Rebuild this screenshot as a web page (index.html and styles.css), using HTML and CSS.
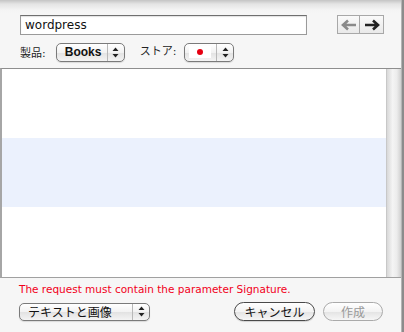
FILE: index.html
```html
<!DOCTYPE html>
<html lang="ja">
<head>
  <meta charset="UTF-8">
  <title>新規作成</title>
  <link rel="stylesheet" href="styles.css">
</head>
<body>
<div class="sheet">
  <div class="toolbar">
    <div class="search-row">
      <div class="search-field">wordpress</div>
      <div class="nav">
        <span class="nav-btn back">
          <svg width="18" height="12" viewBox="0 0 18 12"><path d="M16 6H3M8 1.5L3 6l5 4.5" fill="none" stroke="#8a8a8a" stroke-width="2.6"/></svg>
        </span>
        <span class="nav-btn fwd">
          <svg width="18" height="12" viewBox="0 0 18 12"><path d="M2 6h13M10 1.5L15 6l-5 4.5" fill="none" stroke="#222" stroke-width="2.6"/></svg>
        </span>
      </div>
    </div>
    <div class="filter-row">
      <span class="label">製品:</span>
      <div class="popup popup-product">
        <span class="popup-text">Books</span>
        <span class="popup-arrows">
          <svg width="7" height="11" viewBox="0 0 7 11"><path d="M3.5 0.5L6.5 4H0.5zM3.5 10.5L6.5 7H0.5z" fill="#222"/></svg>
        </span>
      </div>
      <span class="label store-label">ストア:</span>
      <div class="popup popup-store">
        <span class="popup-text"><span class="flag"><span class="dot"></span></span></span>
        <span class="popup-arrows">
          <svg width="7" height="11" viewBox="0 0 7 11"><path d="M3.5 0.5L6.5 4H0.5zM3.5 10.5L6.5 7H0.5z" fill="#222"/></svg>
        </span>
      </div>
    </div>
  </div>

  <div class="list">
    <div class="rows">
      <div class="row"></div>
      <div class="row selected"></div>
      <div class="row"></div>
    </div>
    <div class="scrollbar"></div>
  </div>

  <p class="error">The request must contain the parameter Signature.</p>

  <div class="footer">
    <div class="popup popup-format">
      <span class="popup-text">テキストと画像</span>
      <span class="popup-arrows">
        <svg width="7" height="11" viewBox="0 0 7 11"><path d="M3.5 0.5L6.5 4H0.5zM3.5 10.5L6.5 7H0.5z" fill="#222"/></svg>
      </span>
    </div>
    <div class="buttons">
      <button class="push">キャンセル</button>
      <button class="push" disabled>作成</button>
    </div>
  </div>
</div>
</body>
</html>
```
FILE: styles.css
```css
* {
  margin: 0;
  padding: 0;
  box-sizing: border-box;
}

body {
  width: 404px;
  height: 332px;
  overflow: hidden;
  font-family: "DejaVu Sans", "Noto Sans CJK JP", sans-serif;
  font-size: 12px;
  color: #111;
  background: #8c8c8c;
}

.sheet {
  width: 402px;
  height: 332px;
  display: flex;
  flex-direction: column;
  background: linear-gradient(#c4c4c4 0, #e4e4e4 4px, #f4f4f4 10px, #f6f6f6 14px, #f6f6f6);
  border-right: 1px solid #b5b5b5;
}

.toolbar {
  padding: 15px 0 0 20px;
}

.search-row {
  display: flex;
  align-items: flex-start;
}

.search-field {
  width: 287px;
  height: 20px;
  background: #fff;
  border: 1px solid #9a9a9a;
  border-top-color: #6f6f6f;
  box-shadow: inset 0 1px 1px rgba(0, 0, 0, 0.12);
  font-size: 12px;
  line-height: 18px;
  padding-left: 4px;
}

.nav {
  display: flex;
  margin-left: 30px;
  height: 19px;
  border: 1px solid #a8a8a8;
  background: linear-gradient(#fafafa, #e9e9e9);
}

.nav-btn {
  width: 23px;
  display: flex;
  align-items: center;
  justify-content: center;
}

.nav-btn.back {
  width: 22px;
  border-right: 1px solid #a8a8a8;
}

.filter-row {
  display: flex;
  align-items: center;
  margin-top: 7px;
  height: 20px;
}

.label {
  font-size: 11px;
  color: #222;
  margin-right: 10px;
}

.store-label {
  margin-left: 15px;
  margin-right: 8px;
  position: relative;
  top: -2px;
}

.popup {
  display: flex;
  align-items: stretch;
  height: 19px;
  border: 1px solid #7a7a7a;
  border-radius: 5px;
  background: linear-gradient(#ffffff, #f2f2f2 50%, #e2e2e2 51%, #f4f4f4);
  box-shadow: 0 1px 1px rgba(0, 0, 0, 0.12);
}

.popup-text {
  flex: 1;
  display: flex;
  align-items: center;
  padding-left: 8px;
  font-size: 12px;
}

.popup-product .popup-text {
  font-family: "Liberation Sans", sans-serif;
  font-weight: bold;
  font-size: 12px;
}

.popup-arrows {
  width: 17px;
  border-left: 1px solid #b8b8b8;
  display: flex;
  align-items: center;
  justify-content: center;
}

.popup-product {
  width: 69px;
}

.popup-store {
  width: 50px;
}

.popup-store .popup-text {
  padding-left: 4px;
}

.flag {
  width: 22px;
  height: 12px;
  background: #fff;
  display: flex;
  align-items: center;
  justify-content: center;
}

.dot {
  width: 6px;
  height: 6px;
  border-radius: 50%;
  background: #e60012;
}

.list {
  margin-top: 6px;
  height: 210px;
  display: flex;
  background: #fff;
  border-top: 1px solid #8e8e8e;
  border-left: 2px solid #a6a6a6;
  border-bottom: 1px solid #a0a0a0;
}

.rows {
  flex: 1;
}

.row {
  height: 69px;
}

.row.selected {
  background: #ebf1fd;
}

.scrollbar {
  width: 15px;
  background: linear-gradient(90deg, #d8d8d8, #f4f4f4 40%, #ececec 70%, #d0d0d0);
  border-left: 1px solid #c8c8c8;
}

.error {
  height: 22px;
  line-height: 22px;
  padding-left: 19px;
  font-size: 10.5px;
  color: #f2001a;
}

.footer {
  display: flex;
  align-items: center;
  justify-content: space-between;
  padding: 2px 18px 0 19px;
}

.popup-format {
  width: 131px;
  height: 18px;
}

.buttons {
  display: flex;
  gap: 8px;
}

.push {
  height: 19px;
  border: 1px solid #4a4a4a;
  border-radius: 10px;
  background: linear-gradient(#ffffff, #f3f3f3 50%, #e3e3e3 51%, #f6f6f6);
  font-family: "DejaVu Sans", "Noto Sans CJK JP", sans-serif;
  font-size: 12px;
  color: #111;
  width: 81px;
  box-shadow: 0 1px 1px rgba(0, 0, 0, 0.15);
}

.push:disabled {
  width: 60px;
  border-color: #aaa;
  color: #999;
  box-shadow: none;
}
```
